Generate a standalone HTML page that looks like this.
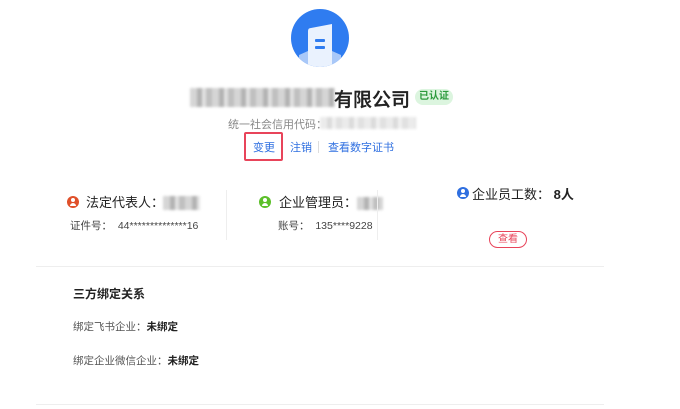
<!DOCTYPE html>
<html><head><meta charset="utf-8"><style>
*{margin:0;padding:0;box-sizing:border-box}
body{width:680px;height:409px;background:#fff;position:relative;overflow:hidden;font-family:"Liberation Sans","Noto Sans CJK SC",sans-serif;color:#333}
.a{position:absolute;white-space:nowrap}
.blur{position:absolute;background:repeating-linear-gradient(90deg,#c8c8c8 0 7px,#9a9a9a 7px 12px,#d8d8d8 12px 16px,#aaa 16px 22px);filter:blur(1.2px);opacity:.75}
.ic{position:absolute;width:12px;height:12px;border-radius:50%}
.ic:before{content:"";position:absolute;left:4px;top:2px;width:4px;height:4px;border-radius:50%;background:#fff}
.ic:after{content:"";position:absolute;left:3px;top:7px;width:6px;height:3px;border-radius:3px 3px 0 0;background:#fff}
</style></head><body>
<svg class="a" style="left:291px;top:9px" width="58" height="58" viewBox="0 0 58 58">
<defs><clipPath id="c"><circle cx="29" cy="29" r="29"/></clipPath></defs>
<circle cx="29" cy="29" r="29" fill="#2f7cf0"/>
<g clip-path="url(#c)">
<path d="M8 46 L17 42 L17 60 L8 60Z" fill="#a9c8f8"/>
<path d="M41 42 L50 46 L50 60 L41 60Z" fill="#a9c8f8"/>
<path d="M17 22 Q17 19 20 19 L41 15 L41 60 L17 60Z" fill="#eaf2fe"/>
<rect x="24" y="30" width="10" height="3" rx="1" fill="#2f7cf0"/>
<rect x="24" y="37" width="10" height="3" rx="1" fill="#2f7cf0"/>
</g></svg>
<div class="blur" style="left:190px;top:88px;width:145px;height:19px"></div>
<div class="a" style="left:334px;top:85px;font-size:19px;color:#222;font-weight:500;-webkit-text-stroke:.3px #222">有限公司</div>
<div class="a" style="left:415px;top:89px;width:38px;height:16px;border-radius:8px;background:#dcf5df;color:#2c9a3c;font-size:10px;font-weight:bold;text-align:center;line-height:16px">已认证</div>
<div class="a" style="left:228px;top:116px;font-size:11px;color:#888">统一社会信用代码：</div>
<div class="blur" style="left:320px;top:117px;width:96px;height:12px;opacity:.35"></div>
<div class="a" style="left:244px;top:132px;width:39px;height:29px;border:2px solid #e8445a;border-radius:2px"></div>
<div class="a" style="left:253px;top:139px;font-size:11px;color:#2f6fe0">变更</div>
<div class="a" style="left:290px;top:139px;font-size:11px;color:#2f6fe0">注销</div>
<div class="a" style="left:318px;top:141px;width:1px;height:12px;background:#ddd"></div>
<div class="a" style="left:328px;top:139px;font-size:11px;color:#2f6fe0">查看数字证书</div>

<div class="ic" style="left:67px;top:196px;background:#e0502a"></div>
<div class="a" style="left:86px;top:192px;font-size:13px;color:#222">法定代表人：</div>
<div class="blur" style="left:163px;top:196px;width:37px;height:14px"></div>
<div class="a" style="left:70px;top:218px;font-size:10.5px;color:#444">证件号：&nbsp;&nbsp;44**************16</div>
<div class="a" style="left:226px;top:190px;width:1px;height:50px;background:#eee"></div>

<div class="ic" style="left:259px;top:196px;background:#5cbf2a"></div>
<div class="a" style="left:279px;top:192px;font-size:13px;color:#222">企业管理员：</div>
<div class="blur" style="left:357px;top:197px;width:26px;height:13px"></div>
<div class="a" style="left:278px;top:218px;font-size:10.5px;color:#444">账号：&nbsp;&nbsp;135****9228</div>
<div class="a" style="left:377px;top:190px;width:1px;height:50px;background:#eee"></div>

<div class="ic" style="left:457px;top:187px;background:#2f6fe0"></div>
<div class="a" style="left:472px;top:184px;font-size:13px;color:#222">企业员工数：&nbsp;<b>8人</b></div>
<div class="a" style="left:489px;top:231px;width:38px;height:17px;border:1px solid #e8445a;border-radius:9px;color:#e8445a;font-size:10px;text-align:center;line-height:15px">查看</div>

<div class="a" style="left:36px;top:266px;width:568px;height:1px;background:#eee"></div>
<div class="a" style="left:73px;top:285px;font-size:12px;font-weight:bold;color:#222">三方绑定关系</div>
<div class="a" style="left:73px;top:319px;font-size:10.5px;color:#555">绑定飞书企业：<b style="color:#222">未绑定</b></div>
<div class="a" style="left:73px;top:353px;font-size:10.5px;color:#555">绑定企业微信企业：<b style="color:#222">未绑定</b></div>
<div class="a" style="left:36px;top:404px;width:568px;height:1px;background:#eee"></div>
</body></html>
